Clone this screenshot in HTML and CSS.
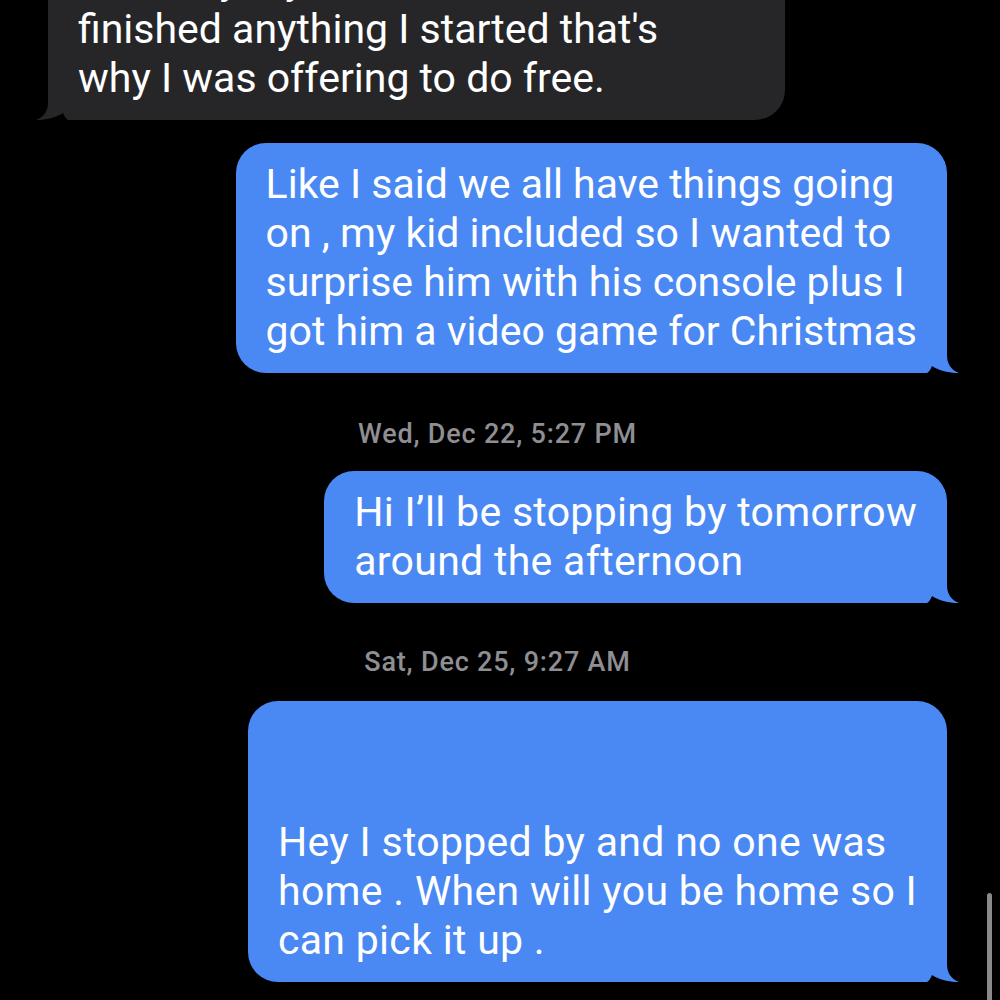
FILE: index.html
```html
<!DOCTYPE html>
<html lang="en">
<head>
  <meta charset="UTF-8">
  <meta name="viewport" content="width=device-width, initial-scale=1.0">
  <title>Messages</title>
  <link rel="stylesheet" href="styles.css">
</head>
<body>
  <div class="thread">

    <div class="bubble in">
      Honestly my whole life I've never<br>
      finished anything I started that's<br>
      why I was offering to do free.
      <svg class="tail" width="32" height="30" viewBox="0 0 32 30">
        <rect x="0" y="0" width="20" height="30" fill="#000"/>
        <path d="M0 0 H20 V12 C20 21 24 27 32 30 C26 30.5 12 28 5 23 C3.5 26.5 2 29 0 30 Z" fill="#262628"/>
      </svg>
    </div>

    <div class="bubble out first">
      Like I said we all have things going<br>
      on , my kid included so I wanted to<br>
      surprise him with his console plus I<br>
      got him a video game for Christmas
      <svg class="tail" width="32" height="30" viewBox="0 0 32 30">
        <rect x="0" y="0" width="20" height="30" fill="#000"/>
        <path d="M0 0 H20 V12 C20 21 24 27 32 30 C26 30.5 12 28 5 23 C3.5 26.5 2 29 0 30 Z" fill="#4a89f3"/>
      </svg>
    </div>

    <div class="stamp">Wed, Dec 22, 5:27 PM</div>

    <div class="bubble out wide">
      Hi I’ll be stopping by tomorrow<br>
      around the afternoon
      <svg class="tail" width="32" height="30" viewBox="0 0 32 30">
        <rect x="0" y="0" width="20" height="30" fill="#000"/>
        <path d="M0 0 H20 V12 C20 21 24 27 32 30 C26 30.5 12 28 5 23 C3.5 26.5 2 29 0 30 Z" fill="#4a89f3"/>
      </svg>
    </div>

    <div class="stamp second">Sat, Dec 25, 9:27 AM</div>

    <div class="bubble out wide tall">
      Hey I stopped by and no one was<br>
      home . When will you be home so I<br>
      can pick it up .
      <svg class="tail" width="32" height="30" viewBox="0 0 32 30">
        <rect x="0" y="0" width="20" height="30" fill="#000"/>
        <path d="M0 0 H20 V12 C20 21 24 27 32 30 C26 30.5 12 28 5 23 C3.5 26.5 2 29 0 30 Z" fill="#4a89f3"/>
      </svg>
    </div>

  </div>

  <div class="scrollbar"></div>
</body>
</html>
```

FILE: styles.css
```css
body {
  margin: 0;
  height: 1000px;
  overflow: hidden;
  background-color: #000000;
  font-family: Roboto, "Noto Sans", sans-serif;
}

.thread {
  display: flex;
  flex-direction: column;
  padding: 0 53px 0 48px;
  margin-top: -61px;
}

.bubble {
  position: relative;
  padding: 17px 30px;
  border-radius: 30px;
  font-size: 41px;
  line-height: 49px;
  color: #ffffff;
  white-space: nowrap;
}

.bubble.in {
  align-self: flex-start;
  width: 677px;
  background-color: #262628;
  border-bottom-left-radius: 0;
}

.bubble.out {
  align-self: flex-end;
  background-color: #4a89f3;
  border-bottom-right-radius: 0;
}

.bubble.wide {
  letter-spacing: 0.3px;
}

.bubble.first {
  margin-top: 23px;
}

.bubble.tall {
  padding-top: 117px;
}

.tail {
  position: absolute;
  bottom: 0;
  right: -12px;
}

.bubble.in .tail {
  right: auto;
  left: -12px;
  transform: scaleX(-1);
}

.stamp {
  align-self: center;
  margin: 46px 0 22px;
  font-size: 27px;
  line-height: 30px;
  font-weight: 500;
  letter-spacing: 0.8px;
  color: #8e8e93;
}

.stamp.second {
  margin: 44px 0 24px;
}

.scrollbar {
  position: fixed;
  top: 893px;
  right: 8px;
  width: 5px;
  height: 120px;
  border-radius: 3px;
  background-color: #8a8a8a;
}
```
